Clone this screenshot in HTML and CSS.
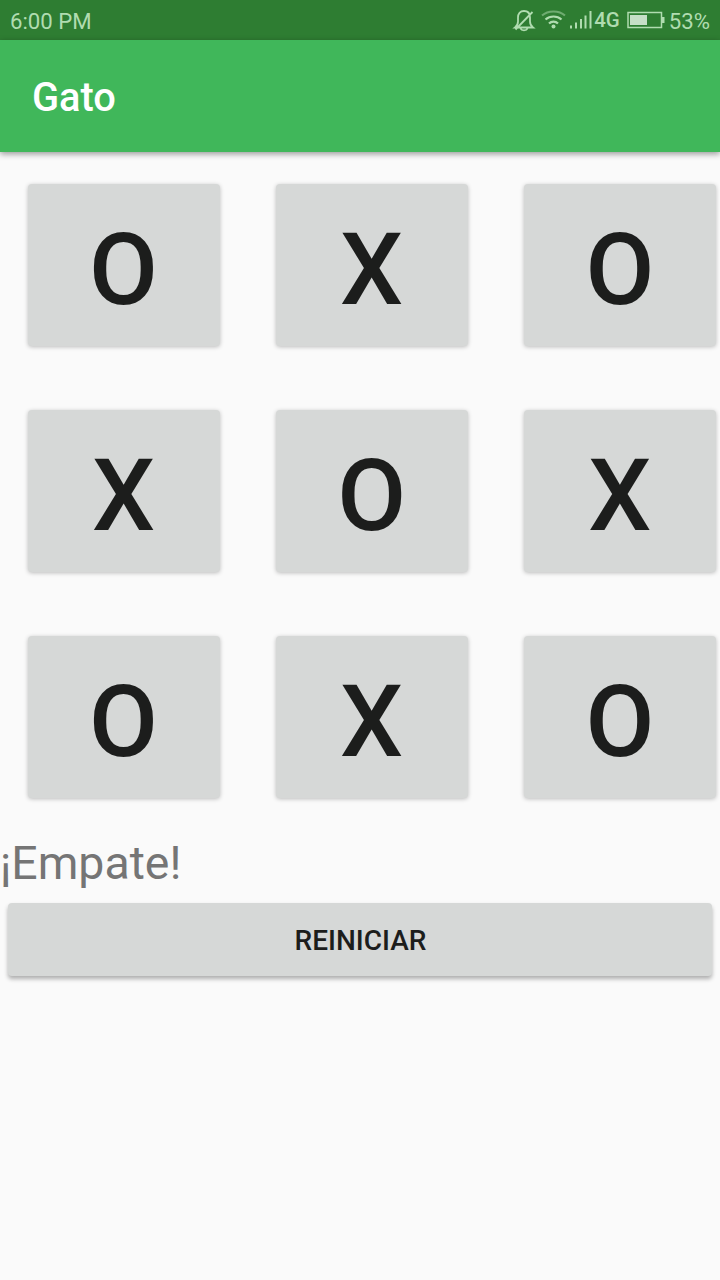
FILE: index.html
```html
<!DOCTYPE html>
<html lang="es">
<head>
<meta charset="utf-8">
<title>Gato</title>
<link rel="stylesheet" href="styles.css">
</head>
<body>
<div class="status">
  <span class="clock">6:00 PM</span>
  <svg class="status-icons" width="82" height="40" viewBox="0 0 82 40" fill="none" stroke="currentColor" stroke-width="1.8">
    <path d="M4 27.500h18c-2-1.500-3-3-3-6v-4c0-4-2-6.500-6-6.500s-6 2.500-6 6.500v4c0 3-1 4.500-3 6zM9.500 28.500c1 2.500 6 2.500 7 0M4.500 29.500L21.500 12"/>
    <path d="M31 15.500c6-5.500 17-5.500 23 0" stroke-width="2" opacity=".5"/>
    <path d="M34.500 19.500c4.500-4 11.500-4 16 0M38 23.500c2.500-2.500 6.500-2.500 9 0" stroke-width="2.200"/>
    <circle cx="42.500" cy="26.500" r="2" fill="currentColor" stroke="none"/>
    <path d="M60 28.500v-3M65 28.500v-6M70 28.500v-9.500M74.500 28.500v-13M79.500 28.500V11" stroke-width="2"/>
  </svg>
  <span class="network">4G</span>
  <svg class="battery" width="38" height="40" viewBox="0 0 38 40"><path d="M1 12.500h33.500v15H1z" fill="none" stroke="currentColor" stroke-width="1.500"/><path d="M35 17h2.500v6H35z" fill="currentColor"/><path class="charge" d="M3 15h17v10H3z"/></svg>
  <span class="percent">53%</span>
</div>
<header class="toolbar">Gato</header>
<main>
  <div class="board">
    <button class="cell">O</button><button class="cell">X</button><button class="cell">O</button>
    <button class="cell">X</button><button class="cell">O</button><button class="cell">X</button>
    <button class="cell">O</button><button class="cell">X</button><button class="cell">O</button>
  </div>
  <p class="result">¡Empate!</p>
  <button class="reset">REINICIAR</button>
</main>
</body>
</html>
```
FILE: styles.css
```css
* { box-sizing: border-box; }
body { margin: 0; height: 1280px; background: #fafafa; font-family: Roboto, sans-serif; overflow: hidden; }
.status { display: flex; align-items: center; height: 40px; padding: 0 10px; background: #2e7d32; color: #b0dcb0; font-size: 22.200px; line-height: 40px; }
.clock, .percent { padding-top: 1px; }
.clock { margin-right: auto; }
.network { font-size: 20.500px; font-weight: 500; margin: 0 7px 0 1px; }
.percent { margin-left: 4px; }
.charge { fill: #c6dfc7; }
.toolbar { height: 112px; padding-left: 32px; background: #40b75a; color: #fff; font-size: 39.800px; font-weight: 500; line-height: 116px; box-shadow: 0 2px 6px rgba(0,0,0,.4); }
button { border: 0; padding: 0; border-radius: 4px; background: #d6d8d7; color: #1c1d1c; font-family: inherit; font-weight: 500; box-shadow: 0 1px 4px rgba(0,0,0,.25); }
.board { display: grid; grid-template-columns: repeat(3, 192px); grid-auto-rows: 162px; gap: 64px 56.200px; padding: 32px 0 0 27.500px; }
.cell { padding-top: 9px; font-size: 100px; line-height: 153px; }
.result { margin: 35px 0 0; height: 70px; color: #757575; font-size: 46.400px; line-height: 60px; }
.reset { display: block; width: 704px; height: 73px; margin: 0 8px; padding: 2px 0 0 1px; font-size: 28px; box-shadow: 0 3px 4px rgba(0,0,0,.3); }
```
